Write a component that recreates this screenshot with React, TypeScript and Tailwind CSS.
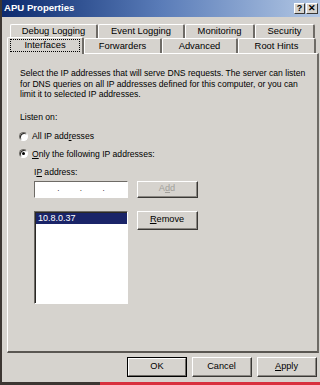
import React from 'react';

// Win2000-style "APU Properties" dialog, Interfaces tab of the DNS server.

const FONT = { fontFamily: '"Liberation Sans", Arial, sans-serif' };

const BACK_TABS = [
  { label: 'Debug Logging', w: 'w-[88px]' },
  { label: 'Event Logging', w: 'w-[87px]' },
  { label: 'Monitoring', w: 'w-[70px]' },
  { label: 'Security', w: 'w-[60px]' },
];

const FRONT_TABS = [
  { label: 'Forwarders', w: 'w-[78px]' },
  { label: 'Advanced', w: 'w-[76px]' },
  { label: 'Root Hints', w: 'w-[78px]' },
];

function Tab({ label, w }: { label: string; w: string }) {
  return (
    <div
      className={`${w} h-full flex items-center justify-center border-l border-t border-white border-r-2 border-r-[#6e6b66] rounded-tl-[2px] rounded-tr-[2px] text-[9.4px] text-black`}
    >
      {label}
    </div>
  );
}

function Button({ children, isDefault, disabled }: { children: React.ReactNode; isDefault?: boolean; disabled?: boolean }) {
  return (
    <div
      className={`w-full h-full flex items-center justify-center border ${
        isDefault ? 'border-black' : 'border-t-white border-l-white border-b-[#3a3835] border-r-[#3a3835]'
      } bg-[#d6d3ce] text-[9.2px] ${disabled ? 'text-[#a19f9a]' : 'text-black'}`}
    >
      <div
        className={`w-full h-full flex items-center justify-center ${
          isDefault ? 'border border-t-white border-l-white border-b-[#6e6b66] border-r-[#6e6b66]' : 'border-b border-r border-[#8a8782]'
        }`}
      >
        {children}
      </div>
    </div>
  );
}

function Radio({ checked }: { checked?: boolean }) {
  return (
    <div className="w-[9px] h-[9px] rounded-full bg-white border border-t-[#6e6b66] border-l-[#6e6b66] border-b-white border-r-white flex items-center justify-center shadow-[inset_1px_1px_0_#2a2825]">
      {checked && <div className="w-[3px] h-[3px] rounded-full bg-black" />}
    </div>
  );
}

export default function App() {
  return (
    <div className="w-[320px] h-[385px] bg-[#d6d3ce] overflow-hidden flex flex-col border-l-2 border-[#3c3632]" style={FONT}>
      {/* title bar */}
      <div className="h-[17px] flex items-center justify-between pl-[2px] pr-[2px] bg-gradient-to-r from-[#0c2a6e] via-[#5a7cb8] to-[#b4c8e4]">
        <span className="text-white font-bold text-[9.6px]">APU Properties</span>
        <div className="flex gap-[1px]">
          <div className="w-[11px] h-[11px] bg-[#d6d3ce] border border-t-white border-l-white border-b-[#3a3835] border-r-[#3a3835] flex items-center justify-center text-[9px] font-bold leading-none">?</div>
          <div className="w-[12px] h-[11px] bg-[#d6d3ce] border border-t-white border-l-white border-b-[#3a3835] border-r-[#3a3835] flex items-center justify-center text-[9px] font-bold leading-none">✕</div>
        </div>
      </div>

      <div className="flex-1 flex flex-col pl-[5px] pr-[1px] pt-[7px]">
        {/* tabs */}
        <div className="flex h-[14px] ml-[3px] mr-[2px]">
          {BACK_TABS.map((t) => (
            <Tab key={t.label} {...t} />
          ))}
        </div>
        <div className="flex h-[15px] items-end">
          <div className="w-[77px] h-[17px] -mb-[1px] relative z-10 bg-[#d6d3ce] flex items-center justify-center border-l border-t border-white border-r-2 border-r-[#6e6b66] rounded-tl-[2px] rounded-tr-[2px] text-[9.4px] px-[2px] pt-[1px] pb-[2px]">
            <span className="w-full h-full flex items-center justify-center border border-dotted border-black">Interfaces</span>
          </div>
          {FRONT_TABS.map((t) => (
            <Tab key={t.label} {...t} />
          ))}
        </div>

        {/* panel */}
        <div className="h-[300px] border-l border-t border-white border-r-2 border-b-2 border-r-[#6e6b66] border-b-[#5a5752] pl-[12px] pt-[14px] text-[8.6px] text-black leading-[10.5px]">
          <p className="pr-[8px]">
            Select the IP addresses that will serve DNS requests. The server can listen for DNS queries on all IP addresses defined for this computer, or you can limit it to selected IP addresses.
          </p>
          <p className="mt-[12px]">Listen on:</p>
          <div className="mt-[9px] flex items-center gap-[4px] -ml-[1px]">
            <Radio />
            <span>
              All IP add<u>r</u>esses
            </span>
          </div>
          <div className="mt-[7px] flex items-center gap-[4px] -ml-[1px]">
            <Radio checked />
            <span>
              <u>O</u>nly the following IP addresses:
            </span>
          </div>
          <div className="ml-[14px] mt-[8px]">
            <p>
              I<u>P</u> address:
            </p>
            <div className="mt-[3px] flex gap-[9px]">
              <div className="w-[94px] h-[17px] bg-white border border-t-[#6e6b66] border-l-[#6e6b66] border-b-white border-r-white flex items-center justify-around px-[12px] text-[8px]">
                <span>.</span>
                <span>.</span>
                <span>.</span>
              </div>
              <div className="w-[61px] h-[17px]">
                <Button disabled>
                  A<u>d</u>d
                </Button>
              </div>
            </div>
            <div className="mt-[13px] flex gap-[9px]">
              <div className="w-[94px] h-[93px] bg-white border border-t-[#6e6b66] border-l-[#6e6b66] border-b-white border-r-white shadow-[inset_1px_1px_0_#2a2825]">
                <div className="h-[11px] bg-[#1a2468] text-white text-[9px] leading-[11px] pl-[2px] mt-[1px] ml-[1px]">10.8.0.37</div>
              </div>
              <div className="w-[61px] h-[19px]">
                <Button>
                  <u>R</u>emove
                </Button>
              </div>
            </div>
          </div>
        </div>

        {/* dialog buttons */}
        <div className="flex justify-end gap-[5px] mt-[4px] mr-[2px]">
          <div className="w-[60px] h-[20px]">
            <Button isDefault>OK</Button>
          </div>
          <div className="w-[60px] h-[20px]">
            <Button>Cancel</Button>
          </div>
          <div className="w-[60px] h-[20px]">
            <Button>
              <u>A</u>pply
            </Button>
          </div>
        </div>
      </div>

      {/* scan edge */}
      <div className="h-[3px] flex">
        <div className="w-[98px] bg-[#3c3632]" />
        <div className="flex-1 bg-[#d8303e]" />
      </div>
    </div>
  );
}
